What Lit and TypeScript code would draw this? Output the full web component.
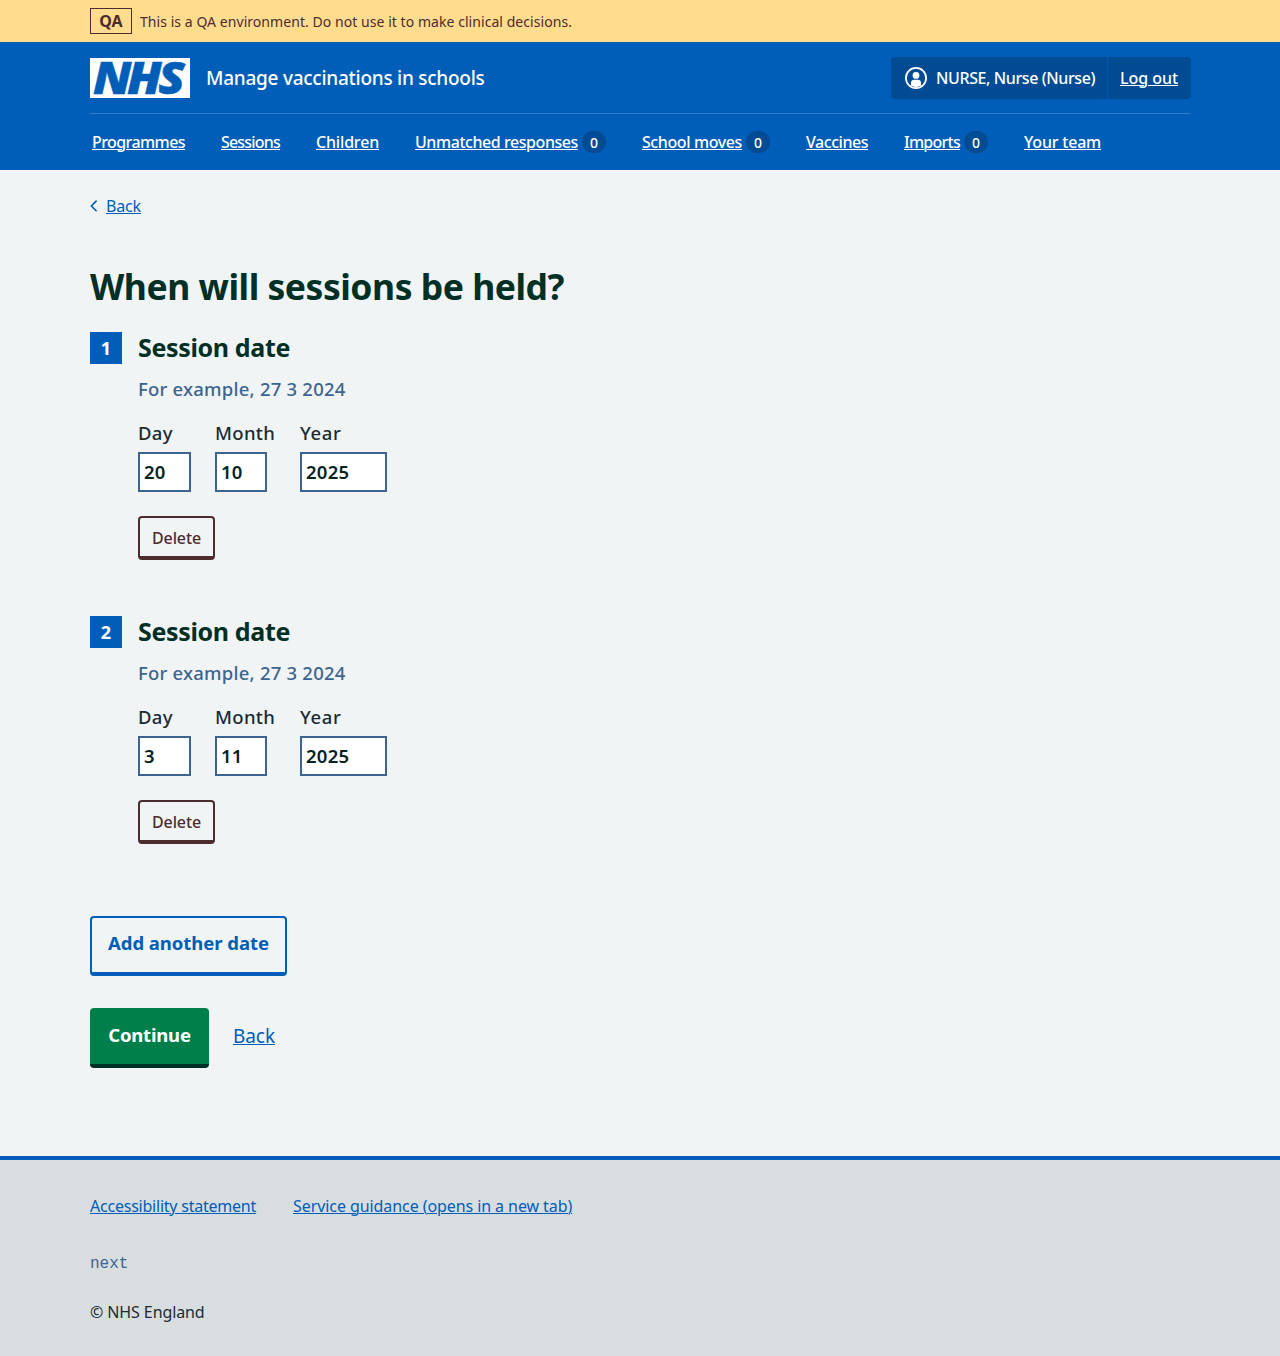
import { LitElement, html, css, nothing } from "lit";
import { customElement, property } from "lit/decorators.js";
import { styleMap } from "lit/directives/style-map.js";

interface NavItem {
  label: string;
  tracking: number;
  count?: number;
}

const NAV: NavItem[] = [
  { label: "Programmes", tracking: -0.58 },
  { label: "Sessions", tracking: -0.8 },
  { label: "Children", tracking: -0.18 },
  { label: "Unmatched responses", tracking: -0.44, count: 0 },
  { label: "School moves", tracking: -0.39, count: 0 },
  { label: "Vaccines", tracking: -0.46 },
  { label: "Imports", tracking: -0.74, count: 0 },
  { label: "Your team", tracking: -0.21 },
];

const SESSIONS = [
  { day: "20", month: "10", year: "2025" },
  { day: "3", month: "11", year: "2025" },
];

@customElement("site-header")
export class SiteHeader extends LitElement {
  static styles = css`
    :host { display: block; }
    * { box-sizing: border-box; }
    .wrap { width: 1100px; margin: 0 auto; }
    a { color: inherit; text-decoration: underline; text-decoration-thickness: 1px; text-underline-offset: 1px; }
    .banner { background: #ffdc8e; color: #4d2c30; height: 42px; }
    .banner .wrap { display: flex; align-items: center; height: 42px; gap: 8px; }
    .env { display: flex; justify-content: center; width: 42px; height: 26px; border: 1px solid #4d2c30; font-size: 16px; font-weight: 700; line-height: 24px; }
    .note { font-size: 14px; line-height: 20px; font-weight: 400; letter-spacing: 0.055px; padding-top: 1px; }
    .bar { background: #005eb8; color: #fff; height: 128px; }
    .top { display: flex; align-items: center; height: 72px; padding-top: 1px; border-bottom: 1px solid #337ec6; }
    .logo { display: block; width: 100px; height: 40px; overflow: visible; }
    .word { font: italic 900 45px "Noto Sans", sans-serif; fill: #005eb8; stroke: #005eb8; stroke-width: 0.5; }
    .service { flex: 1; padding-left: 16px; font-size: 19px; line-height: 28px; font-weight: 500; letter-spacing: -0.26px; }
    .account { display: flex; width: 300px; height: 42px; margin-right: -1px; border-radius: 4px; background: #004b93; font-size: 16px; line-height: 24px; font-weight: 500; }
    .user { display: flex; align-items: center; width: 217px; padding-left: 14px; gap: 9px; border-right: 1px solid #0056a8; letter-spacing: -0.4px; white-space: nowrap; }
    .user svg { flex: none; width: 22px; height: 22px; }
    .out { display: flex; align-items: center; padding-left: 12px; letter-spacing: -0.04px; }
    .nav { display: flex; align-items: center; gap: 36px; height: 56px; padding-left: 2px; font-size: 16px; line-height: 24px; font-weight: 500; white-space: nowrap; }
    .item { display: flex; align-items: center; gap: 4px; }
    .count { display: flex; align-items: center; justify-content: center; width: 24px; height: 22px; border-radius: 12px; background: #004b93; font-size: 14px; line-height: 20px; padding-top: 1px; }
  `;
  render() {
    return html`
      <div class="banner">
        <div class="wrap">
          <strong class="env">QA</strong>
          <span class="note">This is a QA environment. Do not use it to make clinical decisions.</span>
        </div>
      </div>
      <div class="bar">
        <div class="wrap">
          <div class="top">
            <svg class="logo" viewBox="0 0 100 40" role="img">
              <rect width="100" height="40" fill="#fff"></rect>
              <text class="word" transform="translate(3 36) scale(1.08 1)" x="0 31.5 60.5">NHS</text>
            </svg>
            <span class="service">Manage vaccinations in schools</span>
            <div class="account">
              <div class="user">
                <svg viewBox="0 0 22 22">
                  <circle cx="11" cy="11" r="10.1" fill="none" stroke="#fff" stroke-width="1.8"></circle>
                  <circle cx="11" cy="8.4" r="3.4" fill="#fff"></circle>
                  <path fill="#fff" d="M6 18.6V16a3.2 3.2 0 0 1 3.2-3.2h3.6A3.2 3.2 0 0 1 16 16v2.6l-5 2z"></path>
                </svg>
                <span>NURSE, Nurse (Nurse)</span>
              </div>
              <div class="out"><a>Log out</a></div>
            </div>
          </div>
          <nav class="nav">
            ${NAV.map(
              (n) => html`<span class="item"
                ><a style=${styleMap({ letterSpacing: `${n.tracking}px` })}>${n.label}</a>${n.count === undefined
                  ? nothing
                  : html`<span class="count">${n.count}</span>`}</span
              >`,
            )}
          </nav>
        </div>
      </div>
    `;
  }
}

@customElement("session-date")
export class SessionDate extends LitElement {
  @property({ type: Number }) index = 1;
  @property() day = "";
  @property() month = "";
  @property() year = "";
  static styles = css`
    :host { display: flex; gap: 16px; height: 284px; }
    * { box-sizing: border-box; }
    .num { display: flex; justify-content: center; width: 32px; height: 32px; background: #005eb8; color: #fff; font-size: 18px; line-height: 32px; font-weight: 700; }
    .title { margin: 0; font-size: 25px; line-height: 30px; font-weight: 700; letter-spacing: -0.35px; color: #002f26; }
    .hint { margin-top: 13px; color: #3d648f; font-size: 18.5px; line-height: 28px; font-weight: 500; letter-spacing: 0.22px; }
    .fields { display: flex; margin-top: 16px; gap: 24px; }
    .field { display: flex; flex-direction: column; gap: 5px; font-size: 18.5px; line-height: 28px; font-weight: 500; letter-spacing: 0.3px; }
    .label { height: 28px; }
    .yl { letter-spacing: 0.6px; }
    .input { width: 52px; height: 40px; padding: 0 4px 2px; border: 2px solid #3d648f; border-radius: 0; background: #fff; color: #06231f; font: 600 18.5px "Noto Sans", sans-serif; letter-spacing: 0.25px; }
    .day { width: 53px; }
    .month { width: 61px; }
    .year { width: 87px; }
    .delete { display: block; margin-top: 24px; width: 77px; height: 44px; padding: 2px 0 0; border: 2px solid #4d2c30; border-bottom-width: 4px; border-radius: 4px; background: transparent; color: #4d2c30; font: 500 16px "Noto Sans", sans-serif; letter-spacing: -0.12px; }
  `;
  render() {
    return html`
      <div class="num">${this.index}</div>
      <div>
        <h2 class="title">Session date</h2>
        <div class="hint">For example, 27 3 2024</div>
        <div class="fields">
          <label class="field"><span class="label">Day</span><input class="input day" .value=${this.day} /></label>
          <label class="field month"><span class="label">Month</span><input class="input" .value=${this.month} /></label>
          <label class="field"><span class="label yl">Year</span><input class="input year" .value=${this.year} /></label>
        </div>
        <button class="delete">Delete</button>
      </div>
    `;
  }
}

@customElement("site-footer")
export class SiteFooter extends LitElement {
  static styles = css`
    :host { display: block; height: 200px; border-top: 4px solid #005eb8; background: #d8dde0; box-sizing: border-box; }
    .wrap { width: 1100px; margin: 0 auto; padding-top: 34px; font-size: 16px; line-height: 24px; }
    .links { display: flex; gap: 37px; color: #005eb8; }
    a { text-decoration: underline; text-decoration-thickness: 1px; text-underline-offset: 1px; }
    .acc { letter-spacing: -0.226px; }
    .svc { letter-spacing: -0.08px; }
    .release { margin-top: 34px; height: 24px; font: 16px/24px "Liberation Mono", monospace; color: #3d648f; }
    .copy { margin-top: 24px; letter-spacing: -0.1px; }
  `;
  render() {
    return html`<div class="wrap">
      <div class="links">
        <a class="acc">Accessibility statement</a>
        <a class="svc">Service guidance (opens in a new tab)</a>
      </div>
      <div class="release">next</div>
      <div class="copy">© NHS England</div>
    </div>`;
  }
}

@customElement("app-root")
export class AppRoot extends LitElement {
  static styles = css`
    :host { display: flex; flex-direction: column; height: 1356px; background: #f0f4f5; color: #1c2b33; font-family: "Noto Sans", sans-serif; }
    * { box-sizing: border-box; }
    .main { flex: 1; width: 1100px; margin: 0 auto; }
    .back { display: flex; align-items: center; gap: 8px; margin-top: 24px; height: 24px; color: #005eb8; font-size: 16px; line-height: 24px; }
    .chev { width: 8px; height: 14px; }
    .link { color: #005eb8; text-decoration: underline; text-decoration-thickness: 1px; text-underline-offset: 1px; }
    .small { letter-spacing: -0.15px; }
    .heading { margin: 43px 0 21px; font-size: 35.5px; line-height: 50px; font-weight: 700; letter-spacing: -0.48px; color: #002f26; }
    .btn { display: block; height: 60px; padding: 0 0 5px; border-radius: 4px; font: 700 18.5px "Noto Sans", sans-serif; }
    .add { width: 197px; margin-top: 16px; border: 2px solid #005eb8; border-bottom-width: 4px; background: transparent; color: #005eb8; letter-spacing: -0.05px; }
    .actions { display: flex; align-items: center; gap: 24px; margin-top: 32px; font-size: 19px; line-height: 28px; }
    .go { width: 119px; border: 0; border-bottom: 4px solid #002f26; background: #007f4b; color: #fff; letter-spacing: -0.2px; padding-bottom: 3px; }
    .again { padding-bottom: 5px; letter-spacing: -0.08px; }
  `;
  render() {
    return html`
      <site-header></site-header>
      <main class="main">
        <div class="back">
          <svg class="chev" viewBox="0 0 8 14">
            <path d="M6.6 1.6 1.4 7l5.2 5.2" fill="none" stroke="#005eb8" stroke-width="1.6"></path>
          </svg>
          <a class="link small">Back</a>
        </div>
        <h1 class="heading">When will sessions be held?</h1>
        ${SESSIONS.map(
          (s, i) => html`<session-date .index=${i + 1} .day=${s.day} .month=${s.month} .year=${s.year}></session-date>`,
        )}
        <button class="btn add">Add another date</button>
        <div class="actions">
          <button class="btn go">Continue</button>
          <a class="link again">Back</a>
        </div>
      </main>
      <site-footer></site-footer>
    `;
  }
}
